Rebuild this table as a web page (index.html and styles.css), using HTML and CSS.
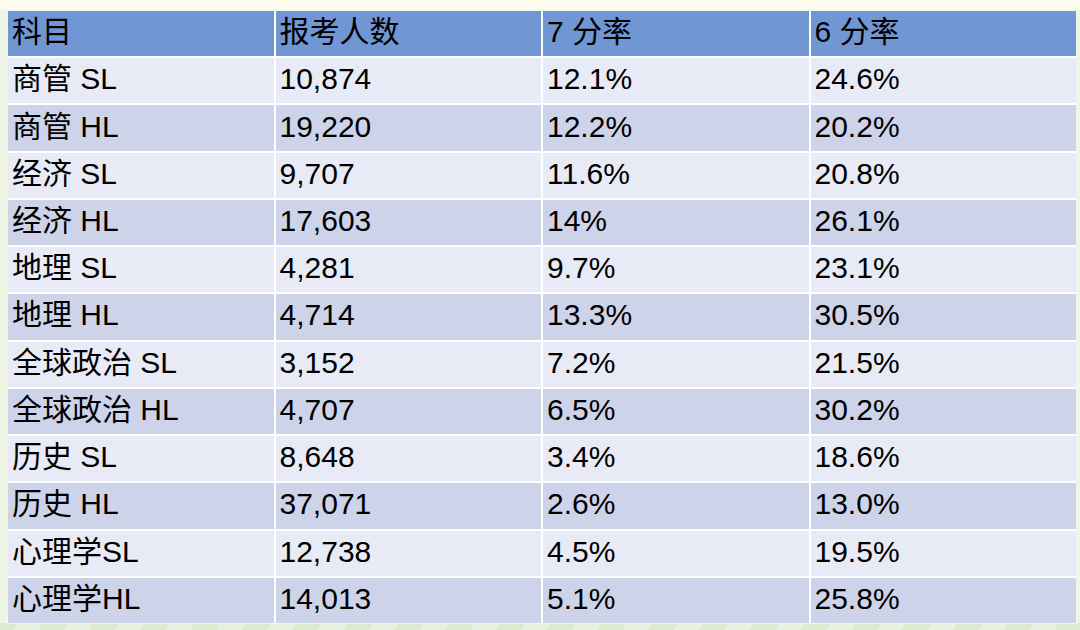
FILE: index.html
```html
<!DOCTYPE html>
<html lang="zh-CN">
<head>
<meta charset="utf-8">
<title>科目统计</title>
<link rel="stylesheet" href="styles.css">
</head>
<body>
<div class="page">
  <div class="sheet">
    <div class="cell head">科目</div><div class="cell head">报考人数</div><div class="cell head">7 分率</div><div class="cell head">6 分率</div>
    <div class="cell odd">商管 SL</div><div class="cell odd">10,874</div><div class="cell odd">12.1%</div><div class="cell odd">24.6%</div>
    <div class="cell even">商管 HL</div><div class="cell even">19,220</div><div class="cell even">12.2%</div><div class="cell even">20.2%</div>
    <div class="cell odd">经济 SL</div><div class="cell odd">9,707</div><div class="cell odd">11.6%</div><div class="cell odd">20.8%</div>
    <div class="cell even">经济 HL</div><div class="cell even">17,603</div><div class="cell even">14%</div><div class="cell even">26.1%</div>
    <div class="cell odd">地理 SL</div><div class="cell odd">4,281</div><div class="cell odd">9.7%</div><div class="cell odd">23.1%</div>
    <div class="cell even">地理 HL</div><div class="cell even">4,714</div><div class="cell even">13.3%</div><div class="cell even">30.5%</div>
    <div class="cell odd">全球政治 SL</div><div class="cell odd">3,152</div><div class="cell odd">7.2%</div><div class="cell odd">21.5%</div>
    <div class="cell even">全球政治 HL</div><div class="cell even">4,707</div><div class="cell even">6.5%</div><div class="cell even">30.2%</div>
    <div class="cell odd">历史 SL</div><div class="cell odd">8,648</div><div class="cell odd">3.4%</div><div class="cell odd">18.6%</div>
    <div class="cell even">历史 HL</div><div class="cell even">37,071</div><div class="cell even">2.6%</div><div class="cell even">13.0%</div>
    <div class="cell odd">心理学SL</div><div class="cell odd">12,738</div><div class="cell odd">4.5%</div><div class="cell odd">19.5%</div>
    <div class="cell even">心理学HL</div><div class="cell even">14,013</div><div class="cell even">5.1%</div><div class="cell even">25.8%</div>
  </div>
</div>
</body>
</html>
```

FILE: styles.css
```css
html, body {
  margin: 0;
  padding: 0;
}
body {
  width: 1080px;
  height: 630px;
  overflow: hidden;
  background:
    repeating-linear-gradient(-60deg, #dcebd0 0 22px, #e8f1df 22px 44px) bottom / 100% 7px no-repeat,
    linear-gradient(#fcfcee 0 10px, #eef5e5 10px);
  font-family: "Liberation Sans", "Noto Sans CJK SC", sans-serif;
}
.page {
  padding: 11px 4px 7px 8px;
}
.sheet {
  width: 1068px;
  height: 612px;
  display: grid;
  grid-template-columns: repeat(4, minmax(0, 1fr));
  grid-template-rows: repeat(13, minmax(0, 1fr));
  gap: 2px;
  background: #ffffff;
  outline: 1px solid #f4f7f0;
}
.cell {
  display: flex;
  align-items: center;
  padding: 0 0 3px 4px;
  font-size: 30px;
  line-height: 1;
  color: #000;
  white-space: nowrap;
  overflow: hidden;
}
.head {
  background: #7196d4;
}
.odd {
  background: #e8eaf5;
}
.even {
  background: #cdd3e9;
}
```
